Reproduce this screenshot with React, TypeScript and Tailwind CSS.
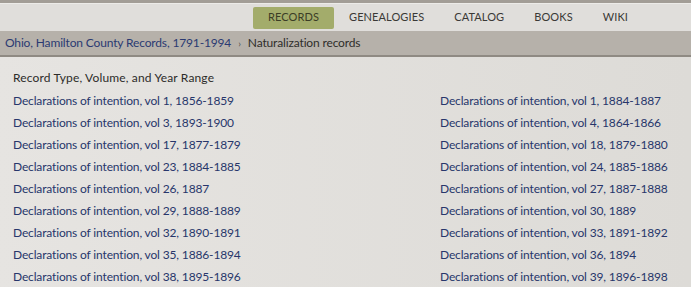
const left = [
  "Declarations of intention, vol 1, 1856-1859",
  "Declarations of intention, vol 3, 1893-1900",
  "Declarations of intention, vol 17, 1877-1879",
  "Declarations of intention, vol 23, 1884-1885",
  "Declarations of intention, vol 26, 1887",
  "Declarations of intention, vol 29, 1888-1889",
  "Declarations of intention, vol 32, 1890-1891",
  "Declarations of intention, vol 35, 1886-1894",
  "Declarations of intention, vol 38, 1895-1896",
]

const right = [
  "Declarations of intention, vol 1, 1884-1887",
  "Declarations of intention, vol 4, 1864-1866",
  "Declarations of intention, vol 18, 1879-1880",
  "Declarations of intention, vol 24, 1885-1886",
  "Declarations of intention, vol 27, 1887-1888",
  "Declarations of intention, vol 30, 1889",
  "Declarations of intention, vol 33, 1891-1892",
  "Declarations of intention, vol 36, 1894",
  "Declarations of intention, vol 39, 1896-1898",
]

const navItems = ["GENEALOGIES", "CATALOG", "BOOKS", "WIKI"]

export default function App() {
  return (
    <div
      className="w-[691px] h-[287px] overflow-hidden bg-[#e3e1de]"
      style={{ fontFamily: "Lato, 'Liberation Sans', sans-serif" }}
    >
      {/* Top nav */}
      <div className="border-t-[3px] border-[#a29d96]">
        <div className="h-[28px] bg-[#e0dedb] border-t border-[#ecebe8] flex items-center pl-[253px] text-[11px] tracking-[0.1px] text-[#3a3936]">
          <div className="h-[22px] px-[15px] flex items-center rounded-[2px] bg-[#a3ac6b] text-[#3b3d26]">
            RECORDS
          </div>
          {navItems.map((item) => (
            <div key={item} className="px-[15px] first:pl-[17px]">
              {item}
            </div>
          ))}
        </div>
      </div>

      {/* Breadcrumb */}
      <div className="h-[26px] bg-[#b6b1aa] border-b-2 border-[#8f8a83] flex items-center pl-[5px] text-[12px] tracking-[-0.15px]">
        <a className="text-[#2b3a72]">Ohio, Hamilton County Records, 1791-1994</a>
        <span className="mx-[7px] text-[10px] text-[#55524d]">›</span>
        <span className="text-[#2f2e2b]">Naturalization records</span>
      </div>

      {/* Content */}
      <div className="pl-[13px] pt-[12px] bg-gradient-to-r from-[#e6e4e1] to-[#dddbd7] h-full">
        <div className="text-[12px] tracking-[0.15px] text-[#2c2b29] h-[18px] leading-[18px]">
          Record Type, Volume, and Year Range
        </div>
        <div className="grid grid-cols-[427px_1fr] mt-[3px] text-[12px] tracking-[-0.15px]">
          {left.map((l, i) => (
            <div key={l} className="contents">
              <a className="h-[22px] leading-[22px] text-[#27366b]">{l}</a>
              <a className="h-[22px] leading-[22px] text-[#27366b]">{right[i]}</a>
            </div>
          ))}
        </div>
      </div>
    </div>
  )
}
